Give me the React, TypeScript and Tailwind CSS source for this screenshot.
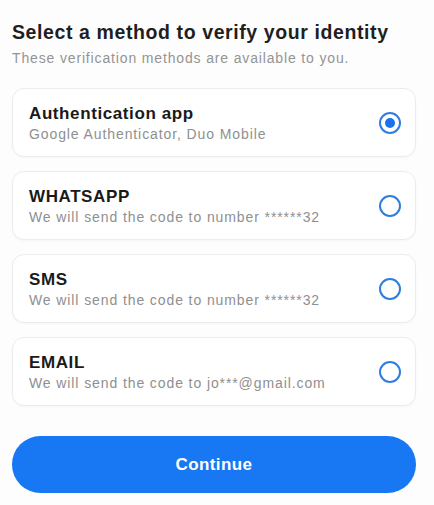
import { useState } from "react";

const METHODS: ReadonlyArray<{ id: string; label: string; detail: string }> = [
  { id: "app", label: "Authentication app", detail: "Google Authenticator, Duo Mobile" },
  { id: "whatsapp", label: "WHATSAPP", detail: "We will send the code to number ******32" },
  { id: "sms", label: "SMS", detail: "We will send the code to number ******32" },
  { id: "email", label: "EMAIL", detail: "We will send the code to jo***@gmail.com" },
];

function Radio({ checked }: { checked: boolean }) {
  return (
    <span className="flex h-[22px] w-[22px] items-center justify-center rounded-full border-2 border-[#2f7de1]">
      {checked && <span className="h-[10px] w-[10px] rounded-full bg-[#1a73e8]" />}
    </span>
  );
}

export default function App() {
  const [selected, setSelected] = useState("app");

  return (
    <div className="min-h-[505px] bg-[#fdfdfd] pl-3 pr-[18px] pt-[19px] font-['Liberation_Sans',Arial,sans-serif]">
      <h1 className="text-[19.5px] font-bold leading-[26px] tracking-[0.6px] text-[#1f1f1f]">
        Select a method to verify your identity
      </h1>
      <p className="mt-[4px] text-[14px] leading-[18px] tracking-[0.85px] text-[#949494]">
        These verification methods are available to you.
      </p>

      <div className="mt-[21px] flex flex-col gap-[14px]">
        {METHODS.map((m) => (
          <button
            key={m.id}
            type="button"
            onClick={() => setSelected(m.id)}
            className="flex h-[69px] w-full items-center justify-between rounded-[12px] border border-[#ececec] bg-white pl-4 pr-[14px] text-left shadow-[0_1px_2px_rgba(0,0,0,0.03)]"
          >
            <span className="flex flex-col">
              <span className="text-[17px] font-bold leading-[21px] tracking-[0.6px] text-[#1a1a1a]">{m.label}</span>
              <span className="mt-[1px] text-[14px] leading-[18px] tracking-[0.9px] text-[#8f8f8f]">{m.detail}</span>
            </span>
            <Radio checked={selected === m.id} />
          </button>
        ))}
      </div>

      <button
        type="button"
        className="mt-[30px] flex h-[57px] w-full items-center justify-center rounded-full bg-[#1877f2] text-[17px] font-bold tracking-[0.4px] text-white"
      >
        Continue
      </button>
    </div>
  );
}
